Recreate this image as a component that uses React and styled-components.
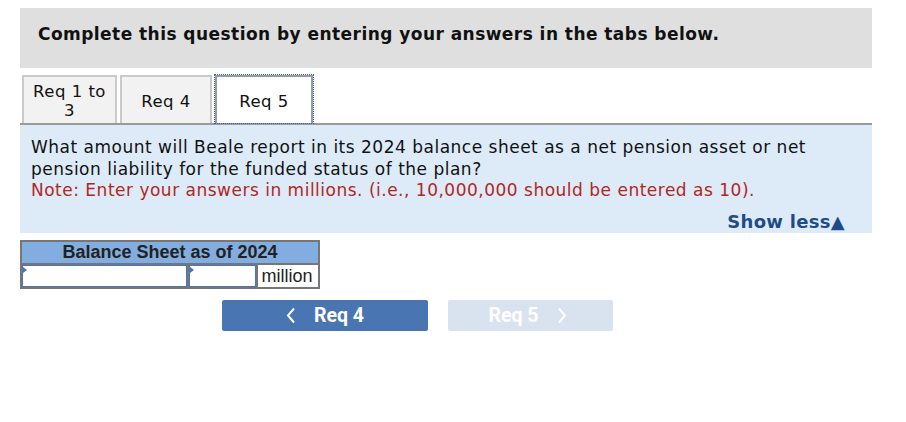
import React from "react";
import styled, { createGlobalStyle } from "styled-components";

const GlobalStyle = createGlobalStyle`
    body {
        margin: 0;
        background: #fff;
        font-family: "DejaVu Sans", Verdana, sans-serif;
        color: #111;
    }
`;

const Page = styled.div`
    width: 852px;
    padding: 8px 0 0 20px;
`;

const Header = styled.div`
    height: 60px;
    background: #dfdfdf;
    box-sizing: border-box;
    padding: 16px 0 0 18px;
    font-weight: bold;
    font-size: 17px;
    letter-spacing: 0.45px;
`;

const TabRow = styled.div`
    display: flex;
    align-items: flex-end;
    gap: 3px;
    margin-top: 7px;
    padding-left: 2px;
    border-bottom: 2px solid #9a9a9a;
`;

const Tab = styled.div`
    width: ${(p) => p.w}px;
    height: 48px;
    box-sizing: border-box;
    display: flex;
    align-items: center;
    justify-content: center;
    text-align: center;
    font-size: 16.5px;
    letter-spacing: 0.5px;
    line-height: 19px;
    background: ${(p) => (p.active ? "#fff" : "#f2f2f2")};
    border: 2px solid ${(p) => (p.active ? "#9a9a9a" : "#cacaca")};
    border-bottom: none;
    outline: ${(p) => (p.active ? "1px dotted #2f66c8" : "none")};
    padding-top: 2px;
`;

const Panel = styled.div`
    background: #ddebf8;
    padding: 12px 27px 0 11px;
    font-size: 17px;
    letter-spacing: 0.5px;
    line-height: 21.5px;
`;

const Question = styled.p`
    margin: 0;
    max-width: 800px;
`;

const Note = styled.p`
    margin: 0;
    color: #b2261f;
`;

const ShowLess = styled.div`
    text-align: right;
    font-weight: bold;
    font-size: 18px;
    letter-spacing: 0.3px;
    color: #1f4b88;
    margin-top: 9px;
    line-height: 22px;
`;

const Table = styled.div`
    width: 300px;
    margin-top: 7px;
    border: 2px solid #767676;
    box-sizing: border-box;
    font-family: "Liberation Sans", Arial, sans-serif;
`;

const TableHead = styled.div`
    background: #82ade0;
    text-align: center;
    font-weight: bold;
    font-size: 18px;
    color: #222;
    height: 21px;
    line-height: 21px;
    border-bottom: 2px solid #767676;
`;

const TableRow = styled.div`
    display: flex;
    height: 22px;
    background: #767676;
    gap: 2px;
`;

const Cell = styled.div`
    position: relative;
    width: ${(p) => p.w}px;
    background: #fff;
    border: ${(p) => (p.input ? "1px solid #4a76b5" : "none")};
    box-sizing: border-box;
    font-size: 18px;
    line-height: 22px;
    padding-left: 3px;
    color: #222;
`;

const Marker = styled.span`
    position: absolute;
    left: 0;
    top: 1px;
    width: 0;
    height: 0;
    border-top: 3px solid transparent;
    border-bottom: 3px solid transparent;
    border-left: 4px solid #4a76b5;
`;

const NavRow = styled.div`
    display: flex;
    gap: 20px;
    margin-top: 11px;
    padding-left: 202px;
`;

const NavButton = styled.div`
    width: ${(p) => p.w}px;
    height: 31px;
    border-radius: 2px;
    background: ${(p) => (p.disabled ? "#d9e3ef" : "#4a75b3")};
    color: #fff;
    display: flex;
    align-items: center;
    justify-content: center;
    gap: 18px;
    font-family: Roboto, "Liberation Sans", sans-serif;
    font-weight: bold;
    font-size: 19.5px;
    padding-right: ${(p) => (p.disabled ? "6px" : "0")};
    box-sizing: border-box;
`;

const Chevron = ({ dir }) => (
    <svg width="10" height="17" viewBox="0 0 10 17" aria-hidden="true">
        <path
            d={dir === "left" ? "M8 1.5 L2 8.5 L8 15.5" : "M2 1.5 L8 8.5 L2 15.5"}
            fill="none"
            stroke="#fff"
            strokeWidth="2"
        />
    </svg>
);

export default function App() {
    return (
        <Page>
            <GlobalStyle />
            <Header>Complete this question by entering your answers in the tabs below.</Header>
            <TabRow>
                <Tab w={95}>
                    Req 1 to
                    <br />3
                </Tab>
                <Tab w={92}>Req 4</Tab>
                <Tab w={98} active>
                    Req 5
                </Tab>
            </TabRow>
            <Panel>
                <Question>
                    What amount will Beale report in its 2024 balance sheet as a net pension asset or net pension
                    liability for the funded status of the plan?
                </Question>
                <Note>Note: Enter your answers in millions. (i.e., 10,000,000 should be entered as 10).</Note>
                <ShowLess>Show less▲</ShowLess>
            </Panel>
            <Table>
                <TableHead>Balance Sheet as of 2024</TableHead>
                <TableRow>
                    <Cell w={166} input>
                        <Marker />
                    </Cell>
                    <Cell w={68} input>
                        <Marker />
                    </Cell>
                    <Cell w={60}>million</Cell>
                </TableRow>
            </Table>
            <NavRow>
                <NavButton w={206}>
                    <Chevron dir="left" />
                    Req 4
                </NavButton>
                <NavButton w={165} disabled>
                    Req 5
                    <Chevron dir="right" />
                </NavButton>
            </NavRow>
        </Page>
    );
}
